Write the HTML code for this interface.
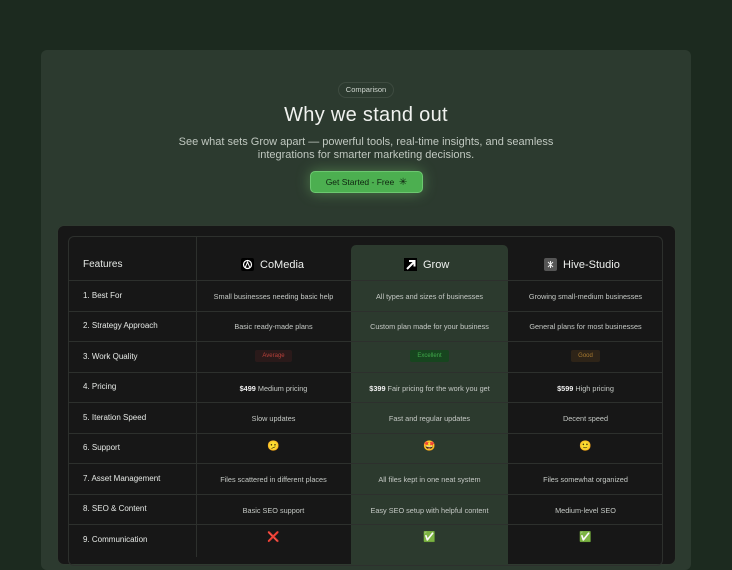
<!DOCTYPE html>
<html><head><meta charset="utf-8"><style>
*{box-sizing:border-box;margin:0;padding:0}
html,body{width:732px;height:552px;overflow:hidden;background:#1c2a1f;font-family:"Liberation Sans",sans-serif;color:#e8ece8}
.card{position:absolute;left:41px;top:50px;width:650px;height:520px;background:#2c3a2f;border-radius:6px}
.pill{position:absolute;left:338px;top:82px;width:56px;height:16px;border:1px solid #3e4b40;border-radius:9px;font-size:7.5px;line-height:14px;text-align:center;color:#cfd6cf}
h1{position:absolute;left:0;width:732px;top:104px;text-align:center;font-size:20px;font-weight:normal;color:#f0f2ef;letter-spacing:0.3px}
.sub{position:absolute;left:0;width:732px;top:136px;text-align:center;font-size:11px;line-height:12.5px;color:#c0c8c0}
.btn{position:absolute;left:310px;top:171px;width:113px;height:22px;background:#4caf50;border:1px solid #6cc870;border-radius:5px;font-size:8.5px;line-height:20px;text-align:center;color:#0f2410;box-shadow:0 0 14px rgba(120,200,110,.45)}
.panel{position:absolute;left:57px;top:225px;width:619px;height:340px;background:#171717;border:1px solid #2f3a30;border-radius:7px}
.tbl{position:absolute;left:68px;top:236px;width:595px;height:330px;border:1px solid #2d302d;border-radius:6px}
.hl{position:absolute;left:351px;top:245px;width:157px;height:320px;background:#2c3a2e;border-radius:5px 5px 0 0}
.hline{position:absolute;left:69px;width:593px;height:1px;background:#2d302d}
.vline{position:absolute;top:237px;width:1px;height:320px;background:#2d302d}
.f{position:absolute;left:83px;font-size:8px;color:#e6e9e6}
.c{position:absolute;text-align:center;font-size:7.3px;color:#c5c9c5}
.c b{color:#f0f0f0;font-weight:600}
.hd{position:absolute;top:258px;font-size:11px;color:#eef0ee;display:flex;align-items:center;gap:6px}
.tag{display:inline-block;padding:0 7px;height:12px;line-height:12px;border-radius:2px;font-size:6px}
.emo{font-size:10px}
</style></head><body>
<div class="card"></div>
<div class="pill">Comparison</div>
<h1>Why we stand out</h1>
<div class="sub">See what sets Grow apart — powerful tools, real-time insights, and seamless<br>integrations for smarter marketing decisions.</div>
<div class="btn">Get Started - Free &nbsp;<span style="font-size:10px">✳</span></div>
<div class="panel"></div>
<div class="hl"></div>
<div class="tbl"></div>
<div class="vline" style="left:196px"></div>
<div class="hline" style="top:280px"></div>
<div class="hline" style="top:311px"></div>
<div class="hline" style="top:341px"></div>
<div class="hline" style="top:372px"></div>
<div class="hline" style="top:402px"></div>
<div class="hline" style="top:433px"></div>
<div class="hline" style="top:463px"></div>
<div class="hline" style="top:494px"></div>
<div class="hline" style="top:524px"></div>

<div class="f" style="top:259px;font-size:10px">Features</div>
<div class="hd" style="left:241px"><svg width="13" height="13"><rect width="13" height="13" rx="2" fill="#000"/><circle cx="6.5" cy="6.5" r="4" fill="none" stroke="#fff" stroke-width="1.2"/><path d="M4 10L6.5 4L9 10" stroke="#fff" fill="none" stroke-width="1"/></svg>CoMedia</div>
<div class="hd" style="left:404px"><svg width="13" height="13"><rect width="13" height="13" fill="#000"/><path d="M3 11L10 4M5 3H10.5V8.5" stroke="#fff" stroke-width="2" fill="none"/></svg>Grow</div>
<div class="hd" style="left:544px"><svg width="13" height="13"><rect width="13" height="13" rx="2" fill="#555"/><path d="M4 4L9 9M9 4L4 9M6.5 3V10" stroke="#eee" stroke-width="1"/></svg>Hive-Studio</div>

<div class="f" style="top:291px">1. Best For</div>
<div class="f" style="top:321px">2. Strategy Approach</div>
<div class="f" style="top:352px">3. Work Quality</div>
<div class="f" style="top:382px">4. Pricing</div>
<div class="f" style="top:413px">5. Iteration Speed</div>
<div class="f" style="top:443px">6. Support</div>
<div class="f" style="top:474px">7. Asset Management</div>
<div class="f" style="top:504px">8. SEO &amp; Content</div>
<div class="f" style="top:535px">9. Communication</div>

<div class="c" style="left:196px;width:155px;top:292px">Small businesses needing basic help</div>
<div class="c" style="left:196px;width:155px;top:322px">Basic ready-made plans</div>
<div class="c" style="left:196px;width:155px;top:350px"><span class="tag" style="background:#2a1a1a;color:#b8403a">Average</span></div>
<div class="c" style="left:196px;width:155px;top:384px"><b>$499</b> Medium pricing</div>
<div class="c" style="left:196px;width:155px;top:414px">Slow updates</div>
<div class="c emo" style="left:196px;width:155px;top:441px">🫤</div>
<div class="c" style="left:196px;width:155px;top:475px">Files scattered in different places</div>
<div class="c" style="left:196px;width:155px;top:506px">Basic SEO support</div>
<div class="c emo" style="left:196px;width:155px;top:532px;color:#e02020">❌</div>

<div class="c" style="left:351px;width:157px;top:292px">All types and sizes of businesses</div>
<div class="c" style="left:351px;width:157px;top:322px">Custom plan made for your business</div>
<div class="c" style="left:351px;width:157px;top:350px"><span class="tag" style="background:#17451f;color:#3fa84a">Excellent</span></div>
<div class="c" style="left:351px;width:157px;top:384px"><b>$399</b> Fair pricing for the work you get</div>
<div class="c" style="left:351px;width:157px;top:414px">Fast and regular updates</div>
<div class="c emo" style="left:351px;width:157px;top:441px">🤩</div>
<div class="c" style="left:351px;width:157px;top:475px">All files kept in one neat system</div>
<div class="c" style="left:351px;width:157px;top:506px">Easy SEO setup with helpful content</div>
<div class="c emo" style="left:351px;width:157px;top:532px">✅</div>

<div class="c" style="left:508px;width:155px;top:292px">Growing small-medium businesses</div>
<div class="c" style="left:508px;width:155px;top:322px">General plans for most businesses</div>
<div class="c" style="left:508px;width:155px;top:350px"><span class="tag" style="background:#2e2418;color:#a87a30">Good</span></div>
<div class="c" style="left:508px;width:155px;top:384px"><b>$599</b> High pricing</div>
<div class="c" style="left:508px;width:155px;top:414px">Decent speed</div>
<div class="c emo" style="left:508px;width:155px;top:441px">🙂</div>
<div class="c" style="left:508px;width:155px;top:475px">Files somewhat organized</div>
<div class="c" style="left:508px;width:155px;top:506px">Medium-level SEO</div>
<div class="c emo" style="left:508px;width:155px;top:532px">✅</div>
</body></html>
